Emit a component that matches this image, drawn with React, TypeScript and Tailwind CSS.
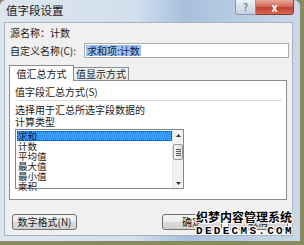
const items = ["求和", "计数", "平均值", "最大值", "最小值", "乘积"];

function WinButton({ label, className }: { label: string; className: string }) {
  return (
    <div
      className={`h-[16px] flex items-center justify-center whitespace-nowrap rounded-[3px] border border-[#707070] bg-[linear-gradient(180deg,#f4f4f4_0%,#ebebeb_48%,#dcdcdc_52%,#cfcfcf_100%)] text-[10px] leading-none text-[#1a1a1a] ${className}`}
    >
      {label}
    </div>
  );
}

export default function App() {
  return (
    <div className="relative w-[304px] h-[245px] overflow-hidden bg-[#8a8a62] font-['Noto_Sans_CJK_SC','Microsoft_YaHei',sans-serif]">
      <div className="w-[300px] h-[241px] flex flex-col rounded-t-[6px] bg-[linear-gradient(90deg,#dde6ef_0%,#d2dfec_45%,#a7c0dc_62%,#b4cae2_75%,#c9d8e8_100%)]">
        {/* title bar */}
        <div className="h-[22px] flex items-start justify-between pl-[6px] pr-[6px]">
          <span className="mt-[4px] whitespace-nowrap text-[11.5px] leading-[13px] text-[#1b1b1b]">值字段设置</span>
          <div className="flex">
            <div className="w-[21px] h-[15px] flex items-center justify-center rounded-bl-[4px] border border-t-0 border-[#8a97a8] bg-[linear-gradient(180deg,#eef3f8_0%,#d7e1ec_50%,#c5d3e2_100%)] text-[10px] leading-none text-[#4b5a6e]">
              ?
            </div>
            <div className="w-[38px] h-[15px] flex items-center justify-center rounded-br-[4px] border border-l-0 border-t-0 border-[#8a3b30] bg-[linear-gradient(180deg,#e9a99b_0%,#d56a58_45%,#c0412e_55%,#d66a52_100%)] text-[11px] font-bold leading-none text-white">
              x
            </div>
          </div>
        </div>

        {/* client area */}
        <div className="flex-1 ml-[4px] mr-[7px] mb-[5px] flex flex-col whitespace-nowrap border border-[#a9b4c2] bg-[#f0f0f0] text-[10px] text-[#1a1a1a]">
          <div className="mt-[3px] h-[13px] flex items-center pl-[5px] leading-[13px]">
            <span className="w-[40px]">源名称：</span>
            <span>计数</span>
          </div>

          <div className="mt-[4px] h-[15px] flex items-center pl-[5px]">
            <span className="w-[74px] leading-[13px]">自定义名称(C):</span>
            <div className="w-[205px] h-[15px] flex items-center border border-[#abadb3] bg-white pl-[1px]">
              <span className="h-[11px] flex items-center bg-[#9fc3ee] px-[1px] leading-none text-[#0b1d44]">求和项:计数</span>
            </div>
          </div>

          {/* tabs */}
          <div className="mt-[7px] ml-[4px] flex items-end h-[16px]">
            <div className="relative z-10 h-[16px] w-[65px] flex items-center justify-center border border-b-0 border-[#898c95] bg-white leading-none">
              值汇总方式
            </div>
            <div className="h-[14px] w-[55px] flex items-center justify-center border border-l-0 border-[#898c95] bg-[linear-gradient(180deg,#f4f4f4_0%,#e6e6e6_100%)] leading-none">
              值显示方式
            </div>
          </div>

          <div className="-mt-px ml-[4px] w-[278px] h-[120px] flex flex-col border border-[#898c95] bg-white pl-[5px]">
            <div className="mt-[4px] h-[13px] leading-[13px]">值字段汇总方式(S)</div>
            <div className="mt-[2px] mr-[4px] h-px bg-[#dcdcdc]" />
            <div className="mt-[3px] leading-[12px]">
              选择用于汇总所选字段数据的
              <br />
              计算类型
            </div>

            <div className="mt-[1px] w-[169px] h-[60px] flex border border-[#828790] bg-white">
              <div className="flex-1 flex flex-col pt-[1px] pl-[1px]">
                {items.map((item, i) => (
                  <div
                    key={item}
                    className={`h-[10px] pl-[1px] text-[9.5px] leading-[10px] ${
                      i === 0 ? "bg-[#3399ff] text-[#0a1a3a] outline-1 outline-dotted outline-[#1a3a6a] -outline-offset-1" : ""
                    }`}
                  >
                    {item}
                  </div>
                ))}
              </div>
              <div className="w-[11px] flex flex-col items-center bg-[#f2f2f2] border-l border-[#e6e6e6]">
                <div className="h-[10px] w-full flex items-center justify-center">
                  <svg width="5" height="3" viewBox="0 0 5 3">
                    <path d="M0 3 L2.5 0 L5 3 Z" fill="#333" />
                  </svg>
                </div>
                <div className="mt-[4px] w-[10px] h-[16px] flex flex-col items-center justify-center gap-[1px] rounded-[2px] border border-[#979797] bg-[linear-gradient(90deg,#f5f5f5_0%,#dedede_100%)]">
                  <div className="w-[5px] h-px bg-[#555]" />
                  <div className="w-[5px] h-px bg-[#555]" />
                  <div className="w-[5px] h-px bg-[#555]" />
                  <div className="w-[5px] h-px bg-[#555]" />
                </div>
                <div className="flex-1" />
                <div className="h-[10px] w-full flex items-center justify-center">
                  <svg width="5" height="3" viewBox="0 0 5 3">
                    <path d="M0 0 L2.5 3 L5 0 Z" fill="#333" />
                  </svg>
                </div>
              </div>
            </div>
          </div>

          {/* bottom buttons */}
          <div className="mt-[14px] flex pl-[7px]">
            <WinButton label="数字格式(N)" className="w-[65px]" />
            <WinButton label="确定" className="ml-[85px] w-[60px]" />
            <WinButton label="取消" className="ml-[6px] w-[60px]" />
          </div>
        </div>
      </div>

      {/* watermark */}
      <div className="absolute left-[196px] top-[210px] flex flex-col items-start whitespace-nowrap text-black [text-shadow:1px_0_#fff,-1px_0_#fff,0_1px_#fff,0_-1px_#fff,1px_1px_#fff,-1px_-1px_#fff,1px_-1px_#fff,-1px_1px_#fff]">
        <span className="text-[12px] font-bold leading-[14px]">织梦内容管理系统</span>
        <span className="mt-[2px] font-['Liberation_Mono',monospace] text-[11px] font-bold leading-[10px] tracking-[2.3px]">
          DEDECMS.COM
        </span>
      </div>
    </div>
  );
}
